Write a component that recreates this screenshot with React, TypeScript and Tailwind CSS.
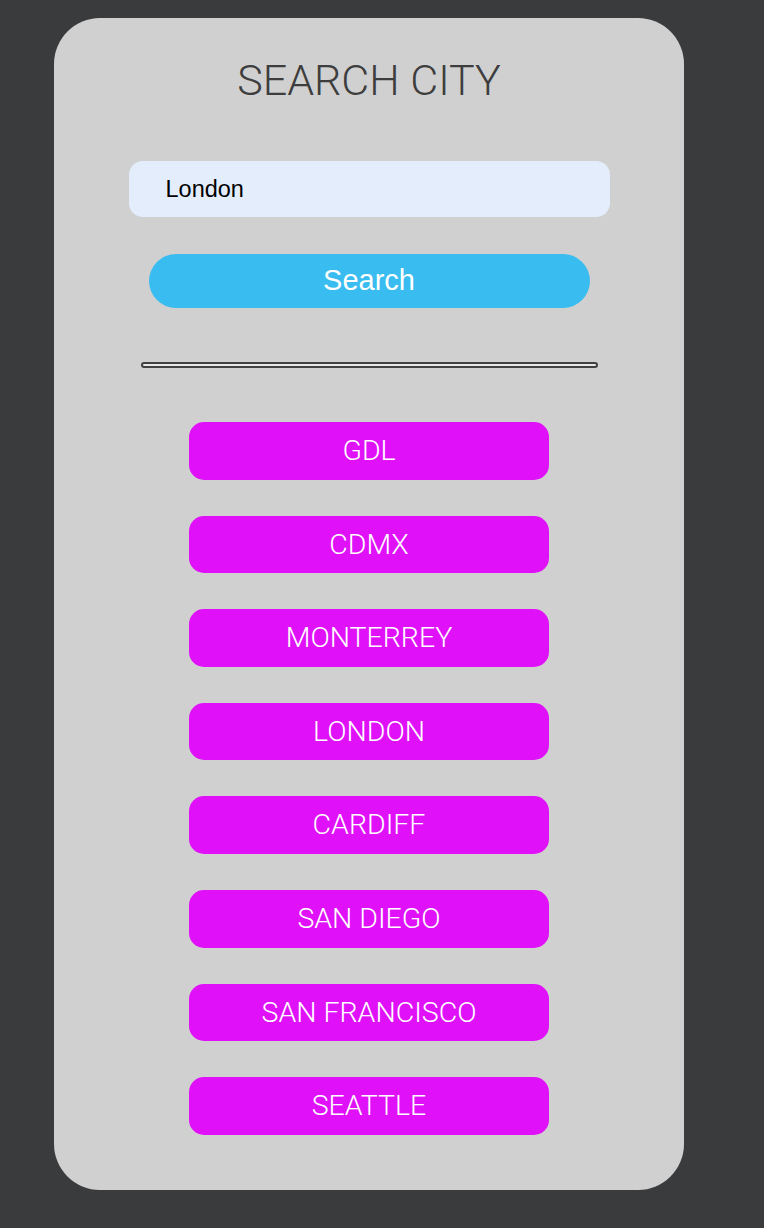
import React, { useState } from 'react';

const cities = ['GDL', 'CDMX', 'MONTERREY', 'LONDON', 'CARDIFF', 'SAN DIEGO', 'SAN FRANCISCO', 'SEATTLE'];

const App = () => {
  const [city, setCity] = useState('London');

  return (
    <div className="min-h-[1228px] w-full bg-[#3a3b3d] pt-[18px] pl-[54px]">
      <div className="flex h-[1172px] w-[630px] flex-col items-center rounded-[46px] bg-[#d0d0d0] pt-[41px]">
        {/* Title */}
        <h1 className="font-['Roboto',sans-serif] text-[43px] font-light leading-none text-[#3d3d3d]">
          SEARCH CITY
        </h1>

        {/* Search form */}
        <input
          value={city}
          onChange={(e) => setCity(e.target.value)}
          className="mt-[59px] h-[56px] w-[481px] rounded-[14px] bg-[#e3edfc] pl-[37px] font-['Liberation_Sans',Arial,sans-serif] text-[23.5px] text-black outline-none"
        />
        <button className="mt-[37px] h-[54px] w-[441px] rounded-full bg-[#39bcef] font-['Liberation_Sans',Arial,sans-serif] text-[29px] text-white">
          Search
        </button>

        <div className="mt-[54px] h-[6px] w-[457px] rounded-[3px] border-2 border-[#404040] bg-[#e8e8e8]" />

        {/* City list */}
        <div className="mt-[54px] flex flex-col gap-[36px]">
          {cities.map((c) => (
            <button
              key={c}
              className="flex h-[57.6px] w-[360px] items-center justify-center rounded-[15px] bg-[#e011f9] pt-[1px] font-['Roboto',sans-serif] text-[28.5px] font-light leading-none text-white"
            >
              {c}
            </button>
          ))}
        </div>
      </div>
    </div>
  );
};

export default App;
